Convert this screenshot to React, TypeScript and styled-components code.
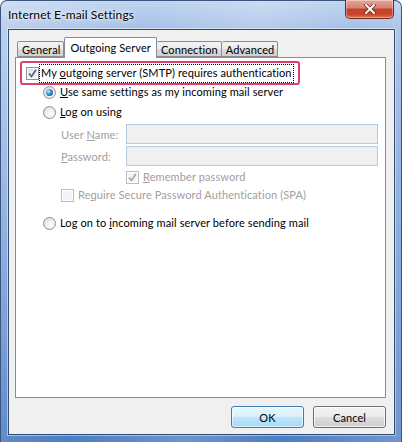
import * as React from 'react';
import styled, { createGlobalStyle } from 'styled-components';

const GlobalStyle = createGlobalStyle`
    html, body {
        margin: 0;
        padding: 0;
        width: 402px;
        height: 442px;
        overflow: hidden;
        background: #ffffff;
    }
    body {
        font-family: Lato, "Noto Sans", sans-serif;
        font-size: 11px;
        letter-spacing: 0.1px;
        color: #000;
    }
`;

const Frame = styled('div')`
    width: 402px;
    height: 442px;
    box-sizing: border-box;
    display: flex;
    flex-direction: column;
    padding: 0 6px 7px 7px;
    border-radius: 7px 7px 0 0;
    border: solid 1px #3a5680;
    border-bottom: none;
    background:
        linear-gradient(100deg, rgba(255,255,255,0.25) 0%, rgba(255,255,255,0) 30%, rgba(255,255,255,0.18) 55%, rgba(255,255,255,0) 75%, rgba(255,255,255,0.2) 100%),
        linear-gradient(180deg, #c0d4ef 0%, #a7c1e7 6%, #87a9dc 40%, #6690cf 75%, #4c7cc4 100%);
`;

const TitleBar = styled('div')`
    height: 28px;
    display: flex;
    justify-content: space-between;
    align-items: flex-start;
    flex-shrink: 0;
`;

const Title = styled('span')`
    margin-top: 6px;
    font-size: 12px;
    color: #000;
    text-shadow: 0 0 6px rgba(255,255,255,0.9), 0 0 3px rgba(255,255,255,0.9);
`;

const CloseButton = styled('div')`
    width: 49px;
    height: 19px;
    margin-right: 1px;
    margin-top: -1px;
    box-sizing: border-box;
    border: solid 1px #6b2a22;
    border-top: none;
    border-radius: 0 0 5px 5px;
    background: linear-gradient(180deg, #e6a79c 0%, #d8806f 45%, #c34128 50%, #c8452c 80%, #e07a5a 100%);
    box-shadow: inset 0 0 0 1px rgba(255,255,255,0.35);
    display: flex;
    align-items: center;
    justify-content: center;
`;

const Client = styled('div')`
    flex: 1;
    display: flex;
    flex-direction: column;
    background: #f0f0f0;
    border: solid 1px #2f4c73;
    box-shadow: 0 0 0 1px rgba(255,255,255,0.45);
    padding: 7px 8px 6px 6px;
`;

const TabStrip = styled('div')`
    display: flex;
    align-items: flex-end;
    height: 20px;
    padding-left: 2px;
    position: relative;
    z-index: 1;
`;

const Tab = styled('div')<{ $active?: boolean }>`
    box-sizing: border-box;
    height: ${props => props.$active ? '21px' : '16px'};
    margin-bottom: ${props => props.$active ? '-1px' : '0'};
    padding: ${props => props.$active ? '0 5px 2px' : '0 3px 0 4px'};
    display: flex;
    align-items: center;
    border: solid 1px #898c95;
    border-radius: 2px 2px 0 0;
    border-bottom: ${props => props.$active ? 'none' : 'solid 1px #898c95'};
    border-left: ${props => props.$active ? 'solid 1px #898c95' : 'none'};
    background: ${props => props.$active ? '#ffffff' : 'linear-gradient(180deg, #f2f2f2 0%, #ebebeb 50%, #dddddd 51%, #cfcfcf 100%)'};
    &:first-child {
        border-left: solid 1px #898c95;
    }
`;

const Panel = styled('div')`
    flex: 1;
    background: #ffffff;
    border: solid 1px #898c95;
    padding: 3px 0 0 4px;
    display: flex;
    flex-direction: column;
`;

const HighlightBox = styled('div')`
    width: 280px;
    height: 24px;
    box-sizing: border-box;
    border: solid 2px #dc3f6e;
    border-radius: 3px;
    display: flex;
    align-items: center;
    padding-left: 4px;
`;

const FocusLabel = styled('span')`
    margin-left: 1px;
    padding: 0 1px 1px;
    height: 16px;
    line-height: 15px;
    outline: dotted 1px #000;
    outline-offset: 0;
    white-space: nowrap;
`;

const Options = styled('div')`
    display: flex;
    flex-direction: column;
    padding-left: 23px;
`;

const Row = styled('div')<{ $mt?: number, $indent?: number }>`
    display: flex;
    align-items: center;
    height: 14px;
    line-height: 14px;
    margin-top: ${props => props.$mt || 0}px;
    padding-left: ${props => props.$indent || 0}px;
    white-space: nowrap;
`;

const FieldRow = styled('div')<{ $mt?: number }>`
    display: flex;
    align-items: center;
    height: 20px;
    margin-top: ${props => props.$mt || 0}px;
    padding-left: 18px;
`;

const FieldLabel = styled('span')`
    width: 65px;
    color: #a0a0a0;
`;

const Field = styled('div')`
    width: 252px;
    height: 20px;
    box-sizing: border-box;
    border: solid 1px #b4c9e4;
    background: #f0f0f0;
`;

const Label = styled('span')<{ $disabled?: boolean }>`
    margin-left: 4px;
    color: ${props => props.$disabled ? '#a0a0a0' : '#000'};
`;

const Box = styled('span')<{ $disabled?: boolean }>`
    width: 13px;
    height: 13px;
    box-sizing: border-box;
    flex-shrink: 0;
    border: solid 1px ${props => props.$disabled ? '#bcbcbc' : '#8e8f8f'};
    background: ${props => props.$disabled
        ? '#f4f4f4'
        : 'linear-gradient(135deg, #dcdcdc 0%, #f0f0f0 60%, #fafafa 100%)'};
    box-shadow: inset 0 0 0 1px #ffffff;
    display: flex;
    align-items: center;
    justify-content: center;
`;

const RadioDot = styled('span')<{ $checked?: boolean }>`
    width: 13px;
    height: 13px;
    box-sizing: border-box;
    flex-shrink: 0;
    border-radius: 50%;
    border: solid 1px #8e8f8f;
    background: radial-gradient(circle at 65% 65%, #ffffff 0%, #ececec 50%, #d2d2d2 100%);
    display: flex;
    align-items: center;
    justify-content: center;
    &::after {
        content: '';
        display: ${props => props.$checked ? 'block' : 'none'};
        width: 7px;
        height: 7px;
        border-radius: 50%;
        background: radial-gradient(circle at 35% 35%, #c8f2ff 0%, #3fa6dc 35%, #1d5b8e 75%, #173f66 100%);
    }
`;

const ButtonRow = styled('div')`
    display: flex;
    justify-content: flex-end;
    gap: 9px;
    margin-top: 8px;
`;

const Button = styled('div')<{ $primary?: boolean }>`
    width: 73px;
    height: 22px;
    box-sizing: border-box;
    border-radius: 3px;
    border: solid 1px ${props => props.$primary ? '#3c7fb1' : '#707070'};
    background: ${props => props.$primary
        ? 'linear-gradient(180deg, #eaf6fd 0%, #d9f0fc 50%, #bee6fd 51%, #a7d9f5 100%)'
        : 'linear-gradient(180deg, #f2f2f2 0%, #ebebeb 50%, #dddddd 51%, #cfcfcf 100%)'};
    box-shadow: inset 0 0 0 1px ${props => props.$primary ? 'rgba(255,255,255,0.6)' : 'rgba(255,255,255,0.7)'};
    display: flex;
    align-items: center;
    justify-content: center;
`;

const Check = ({ color }: { color: string }) => (
    <svg width="9" height="9" viewBox="0 0 9 9">
        <path d="M1 4.5 L3.5 7.5 L8 0.8" fill="none" stroke={color} strokeWidth="1.6" />
    </svg>
);

const CheckBox = ({ checked, disabled }: { checked?: boolean, disabled?: boolean }) => (
    <Box $disabled={disabled}>
        {checked && <Check color={disabled ? '#a6a6a6' : '#4a5f97'} />}
    </Box>
);

export default function App() {
    return (
        <>
            <GlobalStyle />
            <Frame>
                <TitleBar>
                    <Title>Internet E-mail Settings</Title>
                    <CloseButton>
                        <svg width="12" height="10" viewBox="0 0 12 10">
                            <path d="M2 1 L10 9 M10 1 L2 9" stroke="#5a2a24" strokeWidth="3.4" strokeLinecap="square" />
                            <path d="M2 1 L10 9 M10 1 L2 9" stroke="#ffffff" strokeWidth="2" strokeLinecap="square" />
                        </svg>
                    </CloseButton>
                </TitleBar>
                <Client>
                    <TabStrip>
                        <Tab>General</Tab>
                        <Tab $active>Outgoing Server</Tab>
                        <Tab>Connection</Tab>
                        <Tab>Advanced</Tab>
                    </TabStrip>
                    <Panel>
                        <HighlightBox>
                            <CheckBox checked />
                            <FocusLabel>My <u>o</u>utgoing server (SMTP) requires authentication</FocusLabel>
                        </HighlightBox>
                        <Options>
                            <Row>
                                <RadioDot $checked />
                                <Label><u>U</u>se same settings as my incoming mail server</Label>
                            </Row>
                            <Row $mt={6}>
                                <RadioDot />
                                <Label><u>L</u>og on using</Label>
                            </Row>
                            <FieldRow $mt={5}>
                                <FieldLabel>User <u>N</u>ame:</FieldLabel>
                                <Field />
                            </FieldRow>
                            <FieldRow $mt={2}>
                                <FieldLabel><u>P</u>assword:</FieldLabel>
                                <Field />
                            </FieldRow>
                            <Row $mt={4} $indent={83}>
                                <CheckBox checked disabled />
                                <Label $disabled><u>R</u>emember password</Label>
                            </Row>
                            <Row $mt={4} $indent={18}>
                                <CheckBox disabled />
                                <Label $disabled>Re<u>q</u>uire Secure Password Authentication (SPA)</Label>
                            </Row>
                            <Row $mt={14}>
                                <RadioDot />
                                <Label>Log on to <u>i</u>ncoming mail server before sending mail</Label>
                            </Row>
                        </Options>
                    </Panel>
                    <ButtonRow>
                        <Button $primary>OK</Button>
                        <Button>Cancel</Button>
                    </ButtonRow>
                </Client>
            </Frame>
        </>
    );
}
